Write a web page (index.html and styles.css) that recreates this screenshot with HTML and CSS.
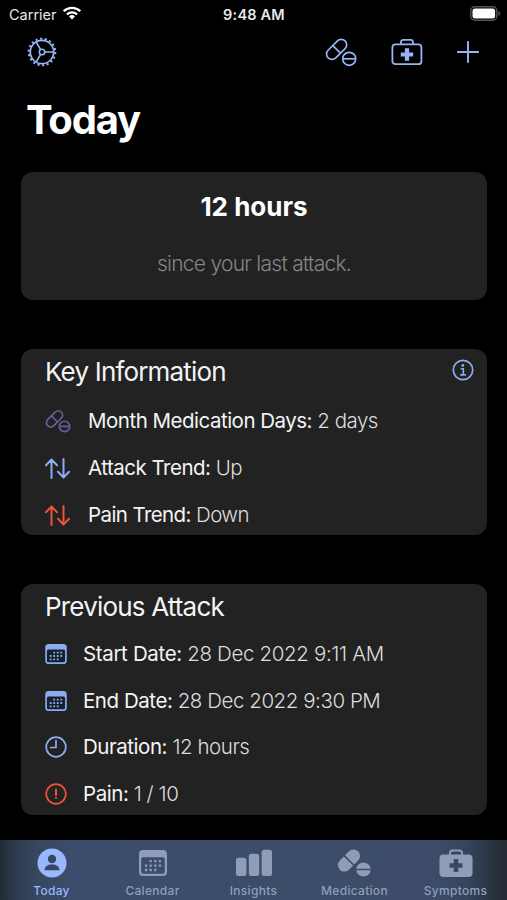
FILE: index.html
```html
<!DOCTYPE html>
<html lang="en">
<head>
<meta charset="utf-8">
<title>Today</title>
<link rel="stylesheet" href="styles.css">
</head>
<body>
<svg class="defs" width="0" height="0" aria-hidden="true">
  <symbol id="pills" viewBox="0 0 32 30">
    <g fill="none" stroke="currentColor">
      <g transform="rotate(-45 11.6 12.4)"><rect x="-.4" y="7" width="24" height="10.8" rx="5.4"/><path d="M11.6 7v10.8"/></g>
      <circle cx="24.2" cy="21.8" r="6.5"/><path d="M17.7 21.8h13"/>
    </g>
  </symbol>
  <symbol id="calendar" viewBox="0 0 28 26">
    <path fill="currentColor" fill-rule="evenodd" d="M4 0h20a4 4 0 0 1 4 4v18a4 4 0 0 1-4 4H4a4 4 0 0 1-4-4V4a4 4 0 0 1 4-4zM4.200 7.200a2 2 0 0 0-2 2v12.500a2 2 0 0 0 2 2h19.600a2 2 0 0 0 2-2V9.200a2 2 0 0 0-2-2z"/>
    <g fill="none" stroke="currentColor" stroke-width="2.300" stroke-dasharray="2.300 2.300"><path d="M10.500 11.200h12"/><path d="M5.900 15.600h16.500"/><path d="M5.900 20h11.500"/></g>
  </symbol>
  <symbol id="trend" viewBox="0 0 25 21">
    <path d="M6.500 20V2M1 7.200 6.500 1.500 12 7.200M18.500 1v18M13 13.800l5.500 5.700 5.500-5.700" fill="none" stroke="currentColor" stroke-width="2" stroke-linecap="round" stroke-linejoin="round"/>
  </symbol>
</svg>

<header class="status">
  <div class="carrier"><span>Carrier</span>
    <svg width="18" height="14" viewBox="0 0 18 14"><g fill="none" stroke="#fff" stroke-width="2.300"><path d="M.8 5.200a11.700 11.700 0 0 1 16.400 0"/><path d="M3.900 8.500a7.200 7.200 0 0 1 10.200 0"/></g><path fill="#fff" d="M9 13.500 6 10.500a4.300 4.300 0 0 1 6 0z"/></svg>
  </div>
  <div class="clock">9:48 AM</div>
  <svg class="battery" width="31" height="15" viewBox="0 0 31 15"><rect x=".8" y=".8" width="26" height="13.400" rx="4" fill="none" stroke="#555" stroke-width="1.400"/><rect x="2.500" y="2.500" width="22.600" height="10" rx="2.500" fill="#fff"/><path d="M28.500 5c2.400.8 2.400 4.200 0 5z" fill="#555"/></svg>
</header>

<nav class="toolbar">
  <svg class="gear" width="30" height="30" viewBox="-15 -15 30 30" fill="none" stroke="currentColor">
    <circle r="13.300" stroke-width="2" stroke-dasharray="2.100 2.543"/><circle r="11.700" stroke-width="1.700"/><circle r="2.700" stroke-width="1.600"/><path d="M2.700 0h9M-1.400-2.400l-4.500-7.700M-1.400 2.400l-4.500 7.700" stroke-width="1.700"/>
  </svg>
  <div class="actions">
    <svg class="pills" width="32" height="30"><use href="#pills"/></svg>
    <svg width="32" height="28" viewBox="0 0 32 28"><g fill="none" stroke="currentColor" stroke-width="1.800"><rect x="1.400" y="6.400" width="29" height="19.800" rx="3"/><path d="M10 6.400V4a2.200 2.200 0 0 1 2.200-2.200h7.500A2.200 2.200 0 0 1 21.900 4v2.400"/></g><path d="M16 10.300v12.400M9.800 16.500h12.400" stroke="currentColor" stroke-width="4.200"/></svg>
    <svg width="22" height="22" viewBox="0 0 22 22"><path d="M11 .9v20.200M.9 11h20.200" fill="none" stroke="currentColor" stroke-width="1.900" stroke-linecap="round"/></svg>
  </div>
</nav>

<h1>Today</h1>

<main>
  <section class="card summary">
    <p class="elapsed">12 hours</p>
    <p class="caption">since your last attack.</p>
  </section>

  <section class="card key">
    <div class="heading"><h2>Key Information</h2>
      <svg class="info" width="22" height="22" viewBox="0 0 22 22"><circle cx="11" cy="11" r="9.700" fill="none" stroke="currentColor" stroke-width="1.700"/><circle cx="10.800" cy="6.500" r="1.400" fill="currentColor"/><path d="M8.600 9.700h2.700v6M8.200 15.900h5.700" fill="none" stroke="currentColor" stroke-width="1.600"/></svg>
    </div>
    <ul>
      <li><svg class="purple pills" width="26" height="24"><use href="#pills"/></svg><span>Month Medication Days: <b>2 days</b></span></li>
      <li><svg class="trend" width="25" height="21"><use href="#trend"/></svg><span>Attack Trend: <b>Up</b></span></li>
      <li class="pain-trend"><svg class="trend red" width="25" height="21"><use href="#trend"/></svg><span>Pain Trend: <b>Down</b></span></li>
    </ul>
  </section>

  <section class="card previous">
    <div class="heading"><h2>Previous Attack</h2></div>
    <ul>
      <li class="start"><svg class="date" width="22" height="20"><use href="#calendar"/></svg><span>Start Date: <b>28 Dec 2022 9:11 AM</b></span></li>
      <li><svg class="date" width="22" height="20"><use href="#calendar"/></svg><span>End Date: <b>28 Dec 2022 9:30 PM</b></span></li>
      <li><svg width="22" height="22" viewBox="0 0 22 22" fill="none" stroke="currentColor" stroke-width="1.700"><circle cx="11" cy="11" r="9.800"/><path d="M11 4.500v7H5.600" stroke-linecap="round" stroke-linejoin="round"/></svg><span>Duration: <b>12 hours</b></span></li>
      <li><svg class="red" width="22" height="22" viewBox="0 0 22 22" fill="none" stroke="currentColor" stroke-width="1.700"><circle cx="11" cy="11" r="9.800"/><path d="M11 6.500v5.400M11 14.800v.1" stroke-width="2" stroke-linecap="round"/></svg><span>Pain: <b>1 / 10</b></span></li>
    </ul>
  </section>
</main>

<footer class="tabs">
  <a class="active"><svg width="30" height="30" viewBox="0 0 30 30"><circle cx="15" cy="15" r="14.500" fill="currentColor"/><g fill="#354863"><circle cx="15" cy="11" r="4.200"/><path d="M7.500 22.300c0-4 3.200-5.900 7.500-5.900s7.500 1.900 7.500 5.900z"/></g></svg><span>Today</span></a>
  <a><svg width="30" height="30" viewBox="-1 -2 30 30"><use href="#calendar" width="28" height="26"/></svg><span>Calendar</span></a>
  <a><svg width="36" height="30" viewBox="0 0 36 30" fill="currentColor"><rect y="9.700" width="10.400" height="18.300" rx="2.500"/><rect x="12.800" y="5.700" width="10.400" height="22.300" rx="2.500"/><rect x="25.600" y="1.700" width="10.400" height="26.300" rx="2.500"/></svg><span>Insights</span></a>
  <a><svg width="36" height="30" viewBox="0 0 36 30" fill="currentColor"><g transform="rotate(-45 12 12.500)"><path d="M11.300 6v13H5.500a6.500 6.500 0 0 1 0-13zM12.800 6h5.700a6.500 6.500 0 0 1 0 13h-5.700z"/></g><path d="M19.200 20.700a7.400 7.400 0 0 1 14.600 0zM19.200 22.300a7.400 7.400 0 0 0 14.600 0z"/></svg><span>Medication</span></a>
  <a><svg width="34" height="30" viewBox="0 0 34 30"><rect x=".5" y="6.500" width="33" height="22.500" rx="4" fill="currentColor"/><path d="M11 7.500V5A2.500 2.500 0 0 1 13.500 2.500h7A2.500 2.500 0 0 1 23 5v2.500" fill="none" stroke="currentColor" stroke-width="2"/><path d="M17 11v13M10.500 17.500h13" stroke="#3b4b66" stroke-width="4.600"/></svg><span>Symptoms</span></a>
</footer>
</body>
</html>
```
FILE: styles.css
```css
* { box-sizing: border-box; margin: 0; padding: 0; }
body {
  width: 507px;
  height: 900px;
  overflow: hidden;
  display: flex;
  flex-direction: column;
  background: #000;
  color: #f4f4f4;
  font-family: Inter, "Liberation Sans", sans-serif;
}
svg { display: block; flex: none; }
.defs { position: absolute; }
.pills { stroke-width: 1.7; }

.status {
  height: 28px;
  padding: 0 6px 0 9px;
  display: grid;
  grid-template-columns: 1fr auto 1fr;
  align-items: center;
  font-size: 14.5px;
  color: #e8e8e8;
}
.carrier { display: flex; align-items: center; gap: 6px; }
.carrier svg { margin-top: -2px; }
.clock { margin-right: 2px; font-weight: 600; letter-spacing: .2px; }
.battery { justify-self: end; margin-top: -2px; }

.toolbar {
  height: 48px;
  padding: 0 28px 0 27px;
  display: flex;
  align-items: center;
  justify-content: space-between;
  color: #97b4f4;
}
.actions { display: flex; align-items: center; gap: 34px; }

h1 {
  height: 96px;
  padding-left: 26px;
  font-size: 40px;
  line-height: 87px;
  font-weight: 700;
  letter-spacing: -1.2px;
  color: #fff;
}

main { padding: 0 20px 0 21px; display: grid; gap: 49px; }
.card { border-radius: 12px; background: #222; }
.summary { height: 128px; padding-top: 17px; text-align: center; }
.elapsed { font-size: 26px; line-height: 36px; font-weight: 700; color: #fff; }
.caption { margin-top: 25px; font-size: 21px; line-height: 28px; font-weight: 300; letter-spacing: -.73px; color: #858585; }

.key { height: 186px; padding: 5px 13px 0 24px; }
.previous { height: 231px; padding: 5px 13px 0 24px; }
.heading {
  height: 36px;
  display: flex;
  align-items: center;
  justify-content: space-between;
  color: #8eaaeb;
}
.info { margin-bottom: 4px; }
h2 { font-size: 26px; line-height: 36px; font-weight: 400; letter-spacing: -.82px; color: #f4f4f4; }
ul { list-style: none; display: grid; }
.key ul { margin-top: 17px; gap: 19px; }
.previous ul { margin-top: 15px; gap: 18.5px; }
li {
  height: 28px;
  display: flex;
  align-items: center;
  color: #8aadf0;
  font-size: 20.5px;
  line-height: 28px;
  letter-spacing: -.45px;
  white-space: nowrap;
}
.key li { gap: 17px; letter-spacing: -.5px; }
.key .pain-trend { letter-spacing: -.6px; }
.previous li { gap: 16px; }
.previous .start { letter-spacing: -.35px; }
li span { color: #f4f4f4; }
li b { font-weight: 300; color: #ddd; }
.trend { margin-right: 1px; }
.purple { color: #6c5b9e; stroke-width: 2.1; }
.red { color: #ee523a; }
.date { background: #17202d; border-radius: 3px; }

.tabs {
  height: 60px;
  margin-top: auto;
  display: grid;
  grid-template-columns: repeat(5, 101px);
  justify-content: center;
  background: linear-gradient(90deg, #232c35 0, #2c3a49 14px, #364760 36px, #3b4d6c 75px, #3c4c68 440px, #33435a 470px, #26313c 495px, #232c34 100%);
  color: #909db8;
}
.tabs a {
  padding-top: 8px;
  display: flex;
  flex-direction: column;
  align-items: center;
  gap: 5px;
  font-size: 12px;
  line-height: 16px;
  font-weight: 500;
  letter-spacing: .3px;
}
.tabs .active { color: #98b8fb; }
```
